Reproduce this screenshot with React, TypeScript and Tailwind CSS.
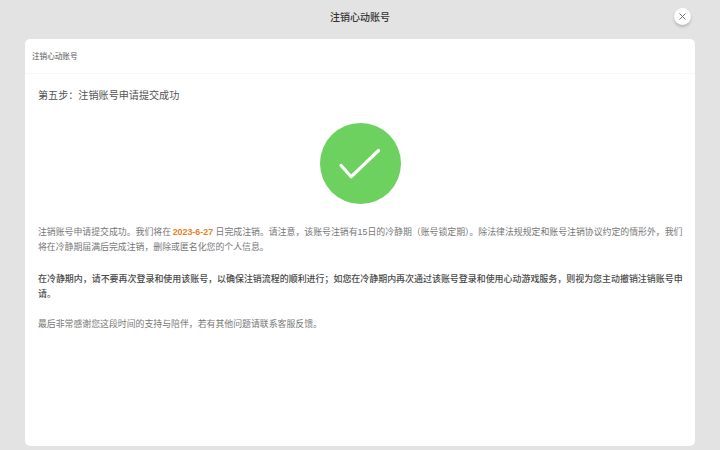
import React from 'react';

const App: React.FC = () => {
  return (
    <div className="w-[720px] h-[450px] overflow-hidden bg-[#e3e3e3] flex flex-col font-['Liberation_Sans','Noto_Sans_CJK_SC',sans-serif]">
      {/* title bar */}
      <div className="relative h-[39px] shrink-0 flex items-center justify-center">
        <h1 className="text-[10px] leading-[36px] font-medium text-[#333] mb-[3px]">注销心动账号</h1>
        <button className="absolute left-[674px] top-[8px] w-[17px] h-[17px] rounded-full bg-white shadow-[0_2px_3px_rgba(0,0,0,0.2)] flex items-center justify-center text-[#777]">
          <svg width="9" height="9" viewBox="0 0 9 9" fill="none" stroke="currentColor" strokeWidth="1">
            <path d="M1.5 1.5l6 6M7.5 1.5l-6 6" />
          </svg>
        </button>
      </div>

      {/* card */}
      <div className="mx-[25px] w-[670px] h-[407px] bg-white rounded-[5px] flex flex-col">
        <div className="h-[35px] shrink-0 flex items-center px-[7px] pt-[1px] border-b border-[#f7f7f7]">
          <span className="text-[7.6px] text-[#555]">注销心动账号</span>
        </div>

        <div className="px-[13px] pt-[14px]">
          <h2 className="text-[10.1px] leading-[16px] text-[#555]">第五步：注销账号申请提交成功</h2>

          <div className="flex justify-center mt-[19px] mb-[21px]">
            <div className="w-[81px] h-[81px] rounded-full bg-[#6dd160] flex items-center justify-center">
              <svg width="42" height="32" viewBox="0 0 42 32" fill="none" stroke="white" strokeWidth="3.2" strokeLinecap="round" strokeLinejoin="round">
                <path d="M2.1 17.5 L12.1 28.8 L39.5 2.5" />
              </svg>
            </div>
          </div>

          <div className="text-[8.9px] leading-[15px] text-[#777] w-[646px]">
            <p>
              注销账号申请提交成功。我们将在<span className="ml-[1.5px] font-bold text-[#ee7f1c]">2023-6-27</span> 日完成注销。请注意，该账号注销有15日的冷静期（账号锁定期）。除法律法规规定和账号注销协议约定的情形外，我们将在冷静期届满后完成注销，删除或匿名化您的个人信息。
            </p>
            <p className="mt-[17px] text-[8.96px] font-medium text-[#4a4a4a]">
              在冷静期内，请不要再次登录和使用该账号，以确保注销流程的顺利进行；如您在冷静期内再次通过该账号登录和使用心动游戏服务，则视为您主动撤销注销账号申请。
            </p>
            <p className="mt-[15px]">最后非常感谢您这段时间的支持与陪伴，若有其他问题请联系客服反馈。</p>
          </div>
        </div>
      </div>
    </div>
  );
};

export default App;
